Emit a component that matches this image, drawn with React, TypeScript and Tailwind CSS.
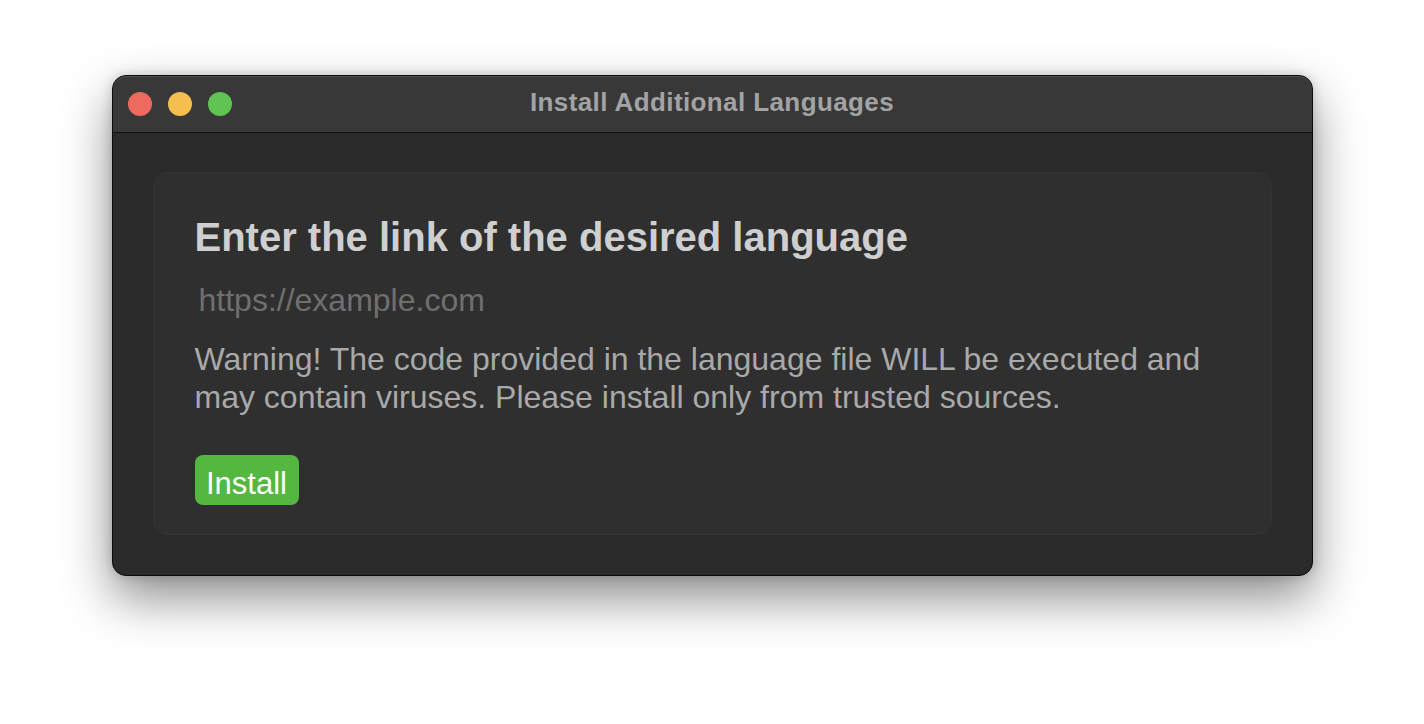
import React from "react";

export default function App() {
  return (
    <div className="w-[1424px] h-[724px] bg-white flex justify-center pt-[75px]" style={{ fontFamily: '"Liberation Sans", Arial, sans-serif' }}>
      <div className="w-[1201px] h-[501px] rounded-[14px] bg-[#2a2a2a] border border-[#0c0c0c] shadow-[0_22px_50px_rgba(0,0,0,0.45),0_0_12px_rgba(0,0,0,0.18)] overflow-hidden flex flex-col">
        <div className="relative h-[57px] shrink-0 bg-[#383838] border-b border-[#111] flex items-center justify-center rounded-t-[13px] shadow-[inset_0_1px_0_rgba(255,255,255,0.12)]">
          <div className="absolute left-[15px] top-[16px] flex gap-[16px]">
            <span className="w-[24px] h-[24px] rounded-full bg-[#ec6a5e]" />
            <span className="w-[24px] h-[24px] rounded-full bg-[#f4bf4f]" />
            <span className="w-[24px] h-[24px] rounded-full bg-[#5fc454]" />
          </div>
          <span className="text-[26px] font-bold text-[#a3a3a3] tracking-[0.4px] -mt-[3px]">Install Additional Languages</span>
        </div>
        <div className="flex-1 px-[40px] pt-[39px] pb-[40px]">
          <div className="h-full rounded-[14px] bg-[#2f2f2f] border border-[#333] pl-[41px] pr-[40px] pt-[40px]">
            <h1 className="text-[40px] leading-[48px] font-bold text-[#cfcfcf]">Enter the link of the desired language</h1>
            <div className="mt-[21px] pl-[4px] text-[32px] leading-[36px] text-[#6f6f6f]">https://example.com</div>
            <p className="mt-[22px] text-[32px] leading-[38px] text-[#a9a9a9] whitespace-nowrap">
              Warning! The code provided in the language file WILL be executed and
              <br />
              may contain viruses. Please install only from trusted sources.
            </p>
            <button className="mt-[39px] w-[104px] h-[50px] rounded-[8px] bg-[#54b73f] text-white text-[31px] leading-none flex items-center justify-center pt-[6px]">
              Install
            </button>
          </div>
        </div>
      </div>
    </div>
  );
}
